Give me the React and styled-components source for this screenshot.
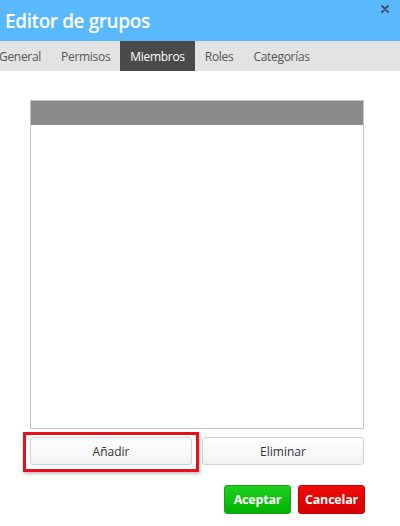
import React from 'react'
import styled, { createGlobalStyle } from 'styled-components'

const tabs = ['General', 'Permisos', 'Miembros', 'Roles', 'Categorías']

const App = () => (
  <>
    <GlobalStyle />
    <Dialog>
      <TitleBar>
        <Title>Editor de grupos</Title>
        <Close aria-label="Cerrar">
          <svg width="8" height="8" viewBox="0 0 8 8">
            <path d="M1 1L7 7M7 1L1 7" stroke="#3f4d6b" strokeWidth="1.8" strokeLinecap="round" />
          </svg>
        </Close>
      </TitleBar>
      <TabBar>
        {tabs.map(t => (
          <Tab key={t} active={t === 'Miembros'}>{t}</Tab>
        ))}
      </TabBar>
      <Body>
        <MemberList>
          <ListHead />
        </MemberList>
        <ActionRow>
          <ActionButton>
            Añadir
            <Highlight />
          </ActionButton>
          <ActionButton>Eliminar</ActionButton>
        </ActionRow>
        <Footer>
          <FooterButton kind="ok">Aceptar</FooterButton>
          <FooterButton kind="cancel">Cancelar</FooterButton>
        </Footer>
      </Body>
    </Dialog>
  </>
)

export default App

const GlobalStyle = createGlobalStyle`
  body {
    margin: 0;
    background: #ffffff;
    font-family: 'Open Sans', 'Liberation Sans', sans-serif;
  }
`

const Dialog = styled.div`
  width: 400px;
  height: 526px;
  overflow: hidden;
  background: #ffffff;
`

const TitleBar = styled.div`
  position: relative;
  height: 41px;
  background: #5ab9fc;
  display: flex;
  align-items: center;
  padding: 1px 0 0 5px;
  box-sizing: border-box;
`

const Title = styled.h1`
  margin: 0;
  color: #ffffff;
  font-size: 19px;
  font-weight: 600;
  letter-spacing: -0.4px;
`

const Close = styled.span`
  position: absolute;
  top: 5px;
  right: 11px;
  display: flex;
`

const TabBar = styled.div`
  display: flex;
  height: 30px;
  background: #e3e3e3;
  margin-left: -11px;
`

const Tab = styled.div`
  display: flex;
  align-items: center;
  padding: 0 10px;
  font-size: 12px;
  letter-spacing: -0.3px;
  color: ${p => (p.active ? '#ffffff' : '#555555')};
  background: ${p => (p.active ? '#4a4a4a' : 'transparent')};
`

const Body = styled.div`
  padding: 29px 36px 0 30px;
`

const MemberList = styled.div`
  height: 327px;
  border: 1px solid #c4c4c4;
  background: #ffffff;
`

const ListHead = styled.div`
  height: 24px;
  background: #8a8a8a;
`

const ActionRow = styled.div`
  display: grid;
  grid-template-columns: 1fr 1fr;
  gap: 10px;
  margin-top: 8px;
`

const ActionButton = styled.button`
  position: relative;
  height: 28px;
  border: 1px solid #d2d2d2;
  border-radius: 3px;
  background: linear-gradient(#ffffff, #f2f2f2);
  font-family: inherit;
  font-size: 12px;
  color: #333333;
  padding: 0;
`

const Highlight = styled.span`
  position: absolute;
  top: -6px;
  left: -8px;
  right: -8px;
  bottom: -8px;
  border: 3px solid #e8101c;
  box-shadow: 1px 2px 3px rgba(0, 0, 0, 0.25);
  pointer-events: none;
`

const Footer = styled.div`
  display: flex;
  justify-content: flex-end;
  gap: 7px;
  margin-top: 20px;
  margin-right: -1px;
`

const FooterButton = styled.button`
  width: 67px;
  height: 29px;
  border: 1px solid ${p => (p.kind === 'ok' ? '#11a611' : '#c00000')};
  border-radius: 3px;
  background: ${p =>
    p.kind === 'ok'
      ? 'linear-gradient(#1fd01f, #00b300)'
      : 'linear-gradient(#f00a0a, #d60000)'};
  color: #ffffff;
  font-family: inherit;
  font-size: 12.5px;
  font-weight: 700;
  letter-spacing: -0.2px;
  padding: 0;
`
